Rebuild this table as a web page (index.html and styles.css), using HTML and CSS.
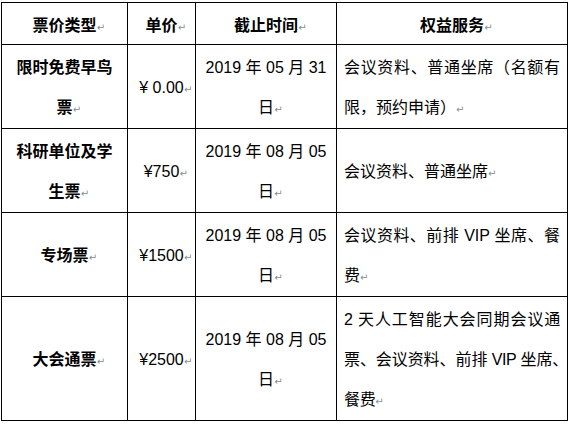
FILE: index.html
```html
<!DOCTYPE html>
<html lang="zh-CN">
<head>
<meta charset="utf-8">
<title>票价类型</title>
<link rel="stylesheet" href="styles.css">
</head>
<body>
<table class="tickets">
  <colgroup>
    <col class="c1"><col class="c2"><col class="c3"><col class="c4">
  </colgroup>
  <thead>
    <tr class="head">
      <th>票价类型<span class="pm">↵</span></th>
      <th>单价<span class="pm">↵</span></th>
      <th>截止时间<span class="pm">↵</span></th>
      <th class="last">权益服务<span class="pm">↵</span><span class="rowend"></span></th>
    </tr>
  </thead>
  <tbody>
    <tr>
      <td class="type">限时免费早鸟票<span class="pm">↵</span></td>
      <td class="price">¥ 0.00<span class="pm">↵</span></td>
      <td class="date">2019 年 05 月 31 日<span class="pm">↵</span></td>
      <td class="perk">会议资料、普通坐席（名额有限，预约申请）<span class="pm">↵</span><span class="rowend"></span></td>
    </tr>
    <tr>
      <td class="type">科研单位及学生票<span class="pm">↵</span></td>
      <td class="price">¥750<span class="pm">↵</span></td>
      <td class="date">2019 年 08 月 05 日<span class="pm">↵</span></td>
      <td class="perk">会议资料、普通坐席<span class="pm">↵</span><span class="rowend"></span></td>
    </tr>
    <tr>
      <td class="type">专场票<span class="pm">↵</span></td>
      <td class="price">¥1500<span class="pm">↵</span></td>
      <td class="date">2019 年 08 月 05 日<span class="pm">↵</span></td>
      <td class="perk">会议资料、前排 VIP 坐席、餐费<span class="pm">↵</span><span class="rowend"></span></td>
    </tr>
    <tr class="tall">
      <td class="type">大会通票<span class="pm">↵</span></td>
      <td class="price">¥2500<span class="pm">↵</span></td>
      <td class="date">2019 年 08 月 05 日<span class="pm">↵</span></td>
      <td class="perk">2 天人工智能大会同期会议通票、会议资料、前排 VIP 坐席<span class="hang">、</span>餐费<span class="pm">↵</span><span class="rowend"></span></td>
    </tr>
  </tbody>
</table>
</body>
</html>
```
FILE: styles.css
```css
body {
  margin: 0;
  background: #fff;
  color: #000;
  font-family: "Liberation Sans", "Noto Sans CJK SC", sans-serif;
  font-size: 16px;
}

.tickets {
  border-collapse: collapse;
  table-layout: fixed;
  width: 566px;
  margin: 2px 0 0 1px;
  line-height: 40px;
}

.c1 { width: 126px; }
.c2 { width: 68px; }
.c3 { width: 141px; }
.c4 { width: 231px; }

.tickets th,
.tickets td {
  border: 1px solid #000;
  padding: 3px 8px 0;
  vertical-align: middle;
  text-align: center;
}

.tickets th {
  padding-top: 4px;
  line-height: 37px;
  font-weight: bold;
}

.tickets .type {
  font-weight: bold;
}

.tickets .perk {
  text-align: justify;
  padding: 3px 7px 0;
}

.tickets .last,
.tickets .perk {
  position: relative;
}

.tall td {
  padding-bottom: 1px;
}

.tall .perk {
  letter-spacing: -0.35px;
}

.pm {
  display: inline-block;
  width: 9px;
  margin-right: -9px;
  white-space: nowrap;
  font-family: "DejaVu Sans", sans-serif;
  font-weight: normal;
  font-size: 10px;
  line-height: 1;
  letter-spacing: 0;
  color: #8c8c8c;
}

.hang {
  font-feature-settings: "halt";
}

.rowend {
  position: absolute;
  right: -3px;
  top: 12px;
  width: 1px;
  height: 2px;
  background: #9a9a9a;
}
```
